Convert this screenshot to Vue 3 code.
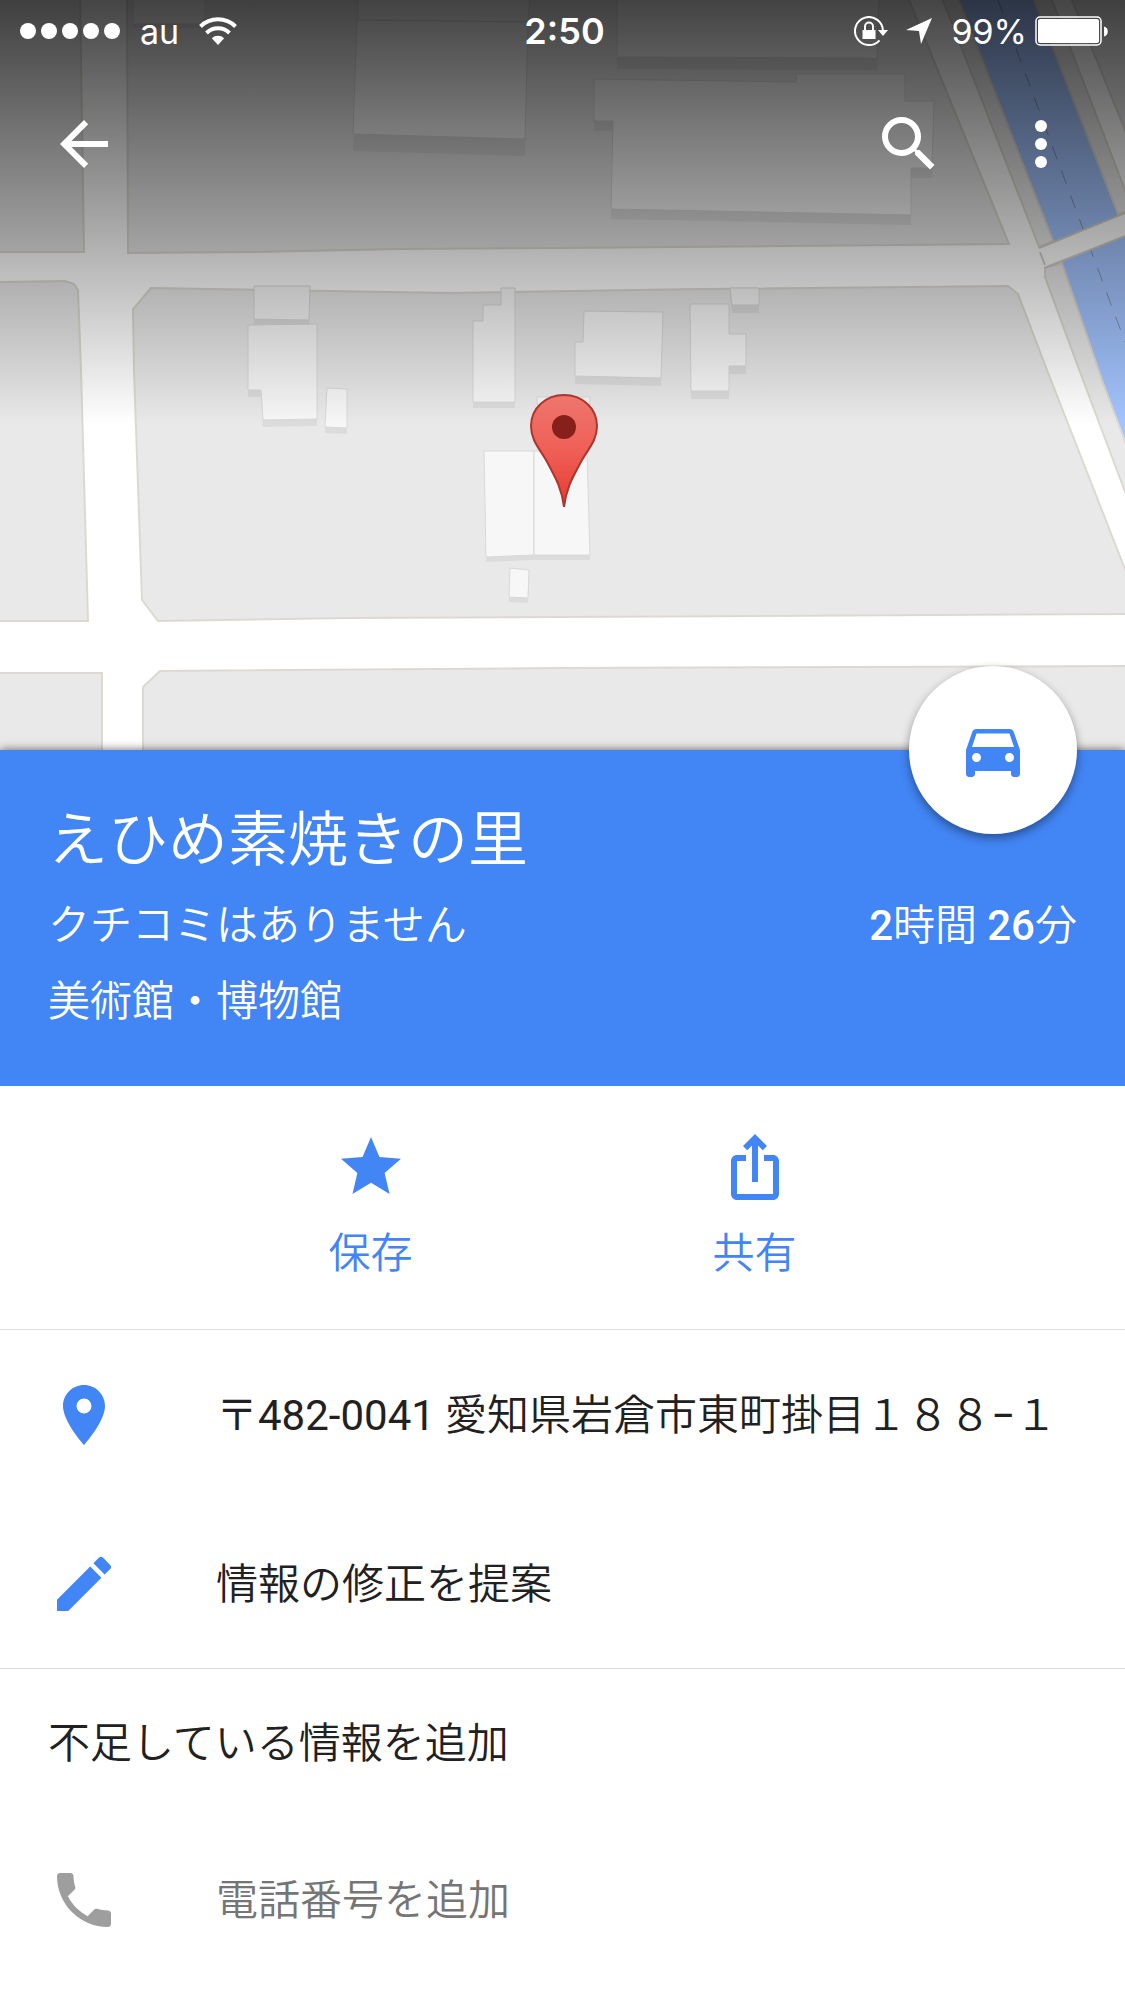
<template>
  <main class="place-page">
    <section class="hero">
      <svg class="map" viewBox="0 0 1125 750" xmlns="http://www.w3.org/2000/svg" role="img" aria-label="地図">
        <defs>
          <linearGradient id="shade" x1="0" y1="0" x2="0" y2="1">
            <stop offset="0" stop-color="#000" stop-opacity="0.73" />
            <stop offset="1" stop-color="#000" stop-opacity="0" />
          </linearGradient>
          <linearGradient id="marker" x1="0" y1="0" x2="0" y2="1">
            <stop offset="0" stop-color="#ee766e" />
            <stop offset="0.5" stop-color="#ef5f56" />
            <stop offset="1" stop-color="#e63a31" />
          </linearGradient>
        </defs>
        <rect width="1125" height="750" fill="#fff" />

        <!-- river -->
        <polygon points="950,0 1034,0 1125,232 1125,440 1102,380 1053,241" fill="#a3c4ff" />
        <path d="M998 0L1125 342" stroke="#7d8fae" stroke-width="1" stroke-dasharray="14 12" fill="none" />

        <!-- blocks -->
        <g fill="#e9e9e9" stroke="#dcdad0" stroke-width="2">
          <polygon v-for="block in blocks" :key="block" :points="block" />
        </g>
        <polygon points="1039,248 1130,211 1130,234 1044,268" fill="#fff" />
        <path d="M1039 248L1130 211M1044 268L1130 234M1040 252L1045 265" stroke="#d3d0c8" stroke-width="2" fill="none" />

        <!-- buildings -->
        <g v-for="building in buildings" :key="building.points">
          <polygon :points="building.points" :transform="`translate(0 ${building.depth})`" fill="#dcdcdc" />
          <polygon :points="building.points" fill="#f7f7f7" stroke="#d9d9d9" stroke-width="1" />
        </g>

        <rect width="1125" height="425" fill="url(#shade)" />

        <path
          d="M564 395C582 395 597 408 597 426C597 440 589 448 582 460C571 480 566 490 564 507C562 490 557 480 546 460C539 448 531 440 531 426C531 408 546 395 564 395Z"
          fill="url(#marker)"
          stroke="#ab352f"
          stroke-width="2"
        />
        <circle cx="564" cy="427" r="12" fill="#871f1a" />
      </svg>

      <div class="overlay">
        <div class="status-bar">
          <div class="status-left">
            <span class="signal"><i v-for="n in 5" :key="n"></i></span>
            <span>au</span>
            <svg class="wifi" viewBox="0 0 38 28">
              <path d="M1.500 9.500A25 25 0 0 1 36.500 9.500M7.500 16A16.500 16.500 0 0 1 30.500 16" fill="none" stroke="#fff" stroke-width="4" />
              <path d="M19 28L12.800 21.300A9 9 0 0 1 25.200 21.300Z" fill="#fff" />
            </svg>
          </div>
          <div class="clock">2:50</div>
          <div class="status-right">
            <svg class="lock" viewBox="0 0 34 30">
              <path d="M29 15A14 14 0 1 0 25.500 24.300" fill="none" stroke="#fff" stroke-width="2" />
              <path d="M24 14H34L29 20Z" fill="#fff" />
              <path d="M8.500 14H21.500V23H8.500Z" fill="#fff" />
              <path d="M11 14V10.500A4 4 0 0 1 19 10.500V14" fill="none" stroke="#fff" stroke-width="2" />
            </svg>
            <svg class="location" viewBox="0 0 26 26"><path d="M26 0L15 26L13 13L0 12Z" fill="#fff" /></svg>
            <span>99%</span>
            <svg class="battery" viewBox="0 0 74 30">
              <rect x="1" y="1" width="65" height="28" rx="4" fill="none" stroke="#fff" stroke-width="1.500" />
              <rect x="3" y="3" width="61" height="24" rx="2" fill="#fff" />
              <path d="M69 10.500C74 11.500 74 19.500 69 20.500Z" fill="#fff" />
            </svg>
          </div>
        </div>
        <nav class="toolbar">
          <button class="icon-btn" type="button" aria-label="戻る">
            <svg viewBox="0 0 24 24"><path d="M20 11H7.830l5.590-5.590L12 4l-8 8 8 8 1.410-1.410L7.830 13H20v-2z" /></svg>
          </button>
          <div class="toolbar-actions">
            <button class="icon-btn" type="button" aria-label="検索">
              <svg viewBox="0 0 24 24"><path d="M15.500 14h-.79l-.28-.27A6.471 6.471 0 0 0 16 9.500 6.500 6.500 0 1 0 9.500 16c1.610 0 3.090-.59 4.230-1.570l.27.28v.79l5 4.990L20.490 19l-4.990-5zm-6 0C7.010 14 5 11.990 5 9.500S7.010 5 9.500 5 14 7.010 14 9.500 11.990 14 9.500 14z" /></svg>
            </button>
            <button class="icon-btn" type="button" aria-label="メニュー">
              <svg viewBox="0 0 24 24"><circle cx="12" cy="6" r="2" /><circle cx="12" cy="12" r="2" /><circle cx="12" cy="18" r="2" /></svg>
            </button>
          </div>
        </nav>
      </div>
    </section>

    <header class="summary">
      <button class="fab" type="button" aria-label="経路">
        <svg viewBox="0 0 24 24"><path d="M18.920 6.010C18.720 5.420 18.160 5 17.500 5h-11c-.66 0-1.210.42-1.420 1.010L3 12v8c0 .55.45 1 1 1h1c.55 0 1-.45 1-1v-1h12v1c0 .55.45 1 1 1h1c.55 0 1-.45 1-1v-8l-2.080-5.990zM6.500 16c-.83 0-1.500-.67-1.500-1.500S5.670 13 6.500 13s1.500.67 1.500 1.500S7.330 16 6.500 16zm11 0c-.83 0-1.500-.67-1.500-1.500s.67-1.500 1.500-1.500 1.500.67 1.500 1.500-.67 1.500-1.500 1.500zM5 11l1.500-4.500h11L19 11H5z" /></svg>
      </button>
      <h1>えひめ素焼きの里</h1>
      <div class="summary-row">
        <span>クチコミはありません</span>
        <span><b>2</b>時間 <b>26</b>分</span>
      </div>
      <div class="summary-row">美術館・博物館</div>
    </header>

    <div class="actions">
      <button class="action" type="button">
        <svg viewBox="0 0 24 24"><path d="M12 17.270L18.180 21l-1.640-7.030L22 9.240l-7.190-.61L12 2 9.190 8.630 2 9.240l5.460 4.730L5.820 21z" /></svg>
        <span>保存</span>
      </button>
      <button class="action" type="button">
        <svg viewBox="0 0 24 24"><path d="M16 5l-1.420 1.420-1.590-1.590V17h-1.980V4.830L9.420 6.420 8 5l4-4 4 4zm4 5v11c0 1.100-.9 2-2 2H6c-1.110 0-2-.9-2-2V10c0-1.110.89-2 2-2h3v2H6v11h12V10h-3V8h3c1.100 0 2 .89 2 2z" /></svg>
        <span>共有</span>
      </button>
    </div>

    <section class="group">
      <a href="#" class="row">
        <svg viewBox="0 0 24 24"><path d="M12 2C8.130 2 5 5.130 5 9c0 5.250 7 13 7 13s7-7.750 7-13c0-3.870-3.130-7-7-7zm0 9.500a2.500 2.500 0 0 1 0-5 2.500 2.500 0 0 1 0 5z" /></svg>
        <span>〒<span class="latin">482-0041</span> 愛知県岩倉市東町掛目１８８<span class="latin">−</span>１</span>
      </a>
      <a href="#" class="row">
        <svg viewBox="0 0 24 24"><path d="M3 17.250V21h3.750L17.810 9.940l-3.750-3.750L3 17.250zM20.710 7.040a.996.996 0 0 0 0-1.410l-2.340-2.340a.996.996 0 0 0-1.410 0l-1.830 1.830 3.750 3.750 1.830-1.830z" /></svg>
        <span>情報の修正を提案</span>
      </a>
    </section>

    <section class="group">
      <h2>不足している情報を追加</h2>
      <a href="#" class="row muted">
        <svg viewBox="0 0 24 24"><path d="M6.620 10.790c1.440 2.830 3.760 5.140 6.590 6.590l2.200-2.200c.27-.27.67-.36 1.020-.24 1.120.37 2.330.57 3.570.57.55 0 1 .45 1 1V20c0 .55-.45 1-1 1-9.390 0-17-7.610-17-17 0-.55.45-1 1-1h3.500c.55 0 1 .45 1 1 0 1.250.2 2.450.57 3.570.11.35.03.74-.25 1.020l-2.200 2.200z" /></svg>
        <span>電話番号を追加</span>
      </a>
    </section>
  </main>
</template>

<script setup>
const blocks = [
  '-5,-5 80,-5 84,252 -5,252',
  '127,-5 128,253 250,252 400,249 562,248 1009,244 907,-5',
  '941,-5 957,-5 1053,241 1039,247',
  '1032,-5 1050,-5 1130,203 1130,211 1118,214',
  '1070,-5 1130,-5 1130,142',
  '-5,282 65,281 74,284 78,290 81,370 88,621 -5,621',
  '151,288 133,309 134,370 142,600 158,621 350,618 562,617 1130,614 1130,582 1047,370 1018,294 1008,286 700,289 450,293',
  '1045,277 1045,268 1062,263 1102,380 1130,455 1130,505 1080,372',
  '-5,673 102,673 102,760 -5,760',
  '143,760 143,687 160,671 562,668 1130,666 1130,760'
]

const buildings = [
  { points: '133,-5 205,-5 205,24 133,24', depth: 4 },
  { points: '358,-5 530,-5 528,22 358,20', depth: 0 },
  { points: '357,20 528,22 525,139 353,134', depth: 17 },
  { points: '617,-5 879,-5 877,59 864,58 617,57', depth: 12 },
  { points: '594,79 796,82 796,74 905,74 905,101 934,101 932,168 911,168 911,215 611,209 613,121 594,121', depth: 10 },
  { points: '254,286 310,286 309,320 254,319', depth: 5 },
  { points: '248,325 317,324 317,419 263,420 261,390 248,390', depth: 7 },
  { points: '327,388 347,389 347,428 325,427', depth: 6 },
  { points: '501,288 515,288 515,402 473,402 473,321 483,321 483,305 501,305', depth: 6 },
  { points: '584,311 663,312 661,378 575,376 575,342 583,342', depth: 8 },
  { points: '730,288 759,288 759,305 732,305', depth: 8 },
  { points: '690,304 729,304 729,334 746,334 746,366 729,366 729,391 691,391', depth: 8 },
  { points: '537,397 590,397 588,440 540,440', depth: 4 },
  { points: '484,451 534,451 534,555 486,557', depth: 5 },
  { points: '534,451 587,451 590,555 534,555', depth: 5 },
  { points: '510,568 529,570 528,598 509,597', depth: 5 }
]
</script>

<style>
body {
  margin: 0;
  background: #fff;
}
</style>

<style scoped>
.place-page {
  font-family: Roboto, "Noto Sans CJK JP", sans-serif;
  font-size: 42px;
  font-weight: 350;
  color: #212121;
}

button {
  border: none;
  padding: 0;
  background: none;
  font: inherit;
  color: inherit;
  cursor: pointer;
}

svg {
  display: block;
  flex: none;
}

.hero {
  position: relative;
}
.map {
  width: 100%;
  height: auto;
}
.overlay {
  position: absolute;
  top: 0;
  left: 0;
  right: 0;
  color: #fff;
}

.status-bar {
  display: grid;
  grid-template-columns: 1fr auto 1fr;
  align-items: center;
  height: 62px;
  padding: 0 16px 0 20px;
  font-family: Inter, "Liberation Sans", sans-serif;
  font-size: 34px;
  font-weight: 400;
}
.status-left,
.status-right {
  display: flex;
  align-items: center;
}
.status-left {
  gap: 20px;
}
.status-right {
  justify-content: flex-end;
}
.signal {
  display: flex;
  gap: 5px;
}
.signal i {
  width: 16px;
  height: 16px;
  border-radius: 50%;
  background: #fff;
}
.wifi {
  width: 38px;
  height: 28px;
}
.clock {
  font-size: 36px;
  font-weight: 600;
}
.lock {
  width: 34px;
  height: 30px;
  margin-right: 18px;
}
.location {
  width: 26px;
  height: 26px;
  margin-right: 19px;
}
.battery {
  width: 74px;
  height: 30px;
  margin-left: 8px;
}

.toolbar {
  display: flex;
  justify-content: space-between;
  align-items: center;
  height: 164px;
  padding: 0 48px;
}
.toolbar-actions {
  display: flex;
  gap: 60px;
}
.icon-btn svg {
  width: 72px;
  height: 72px;
  fill: #fff;
}

.summary {
  position: relative;
  padding: 53px 48px 46px;
  background: #4285f5;
  color: #fff;
  box-shadow: 0 0 9px rgba(0, 0, 0, 0.6);
}
.summary h1 {
  margin: 0 0 9px;
  font-size: 60px;
  font-weight: 350;
  line-height: 76px;
}
.summary-row {
  display: flex;
  justify-content: space-between;
  line-height: 76px;
}
.summary-row b {
  font-weight: 500;
}
.fab {
  position: absolute;
  top: -84px;
  right: 48px;
  display: flex;
  align-items: center;
  justify-content: center;
  width: 168px;
  height: 168px;
  border-radius: 50%;
  background: #fff;
  box-shadow: 0 4px 10px rgba(0, 0, 0, 0.4);
}
.fab svg {
  width: 72px;
  height: 72px;
  fill: #4285f5;
}

.actions {
  position: relative;
  display: flex;
  justify-content: center;
  padding: 45px 0 44px;
  background: #fff;
  color: #4285f5;
}
.action {
  display: flex;
  flex-direction: column;
  align-items: center;
  gap: 20px;
  width: 384px;
  line-height: 62px;
}
.action svg {
  width: 72px;
  height: 72px;
  fill: #4285f5;
}

.group {
  border-top: 1px solid #dcdcdc;
}
.group h2 {
  margin: 0;
  padding: 44px 48px 40px;
  font-size: 42px;
  font-weight: 350;
  line-height: 62px;
}
.row {
  display: flex;
  align-items: center;
  gap: 96px;
  min-height: 169px;
  padding: 0 48px;
  color: inherit;
  line-height: 62px;
  text-decoration: none;
}
.row > span {
  padding-top: 3px;
}
.row svg {
  width: 72px;
  height: 72px;
  fill: #4285f5;
}
.row.muted {
  color: #757575;
}
.row.muted svg {
  fill: #9e9e9e;
}
.latin {
  font-weight: 400;
}
</style>
